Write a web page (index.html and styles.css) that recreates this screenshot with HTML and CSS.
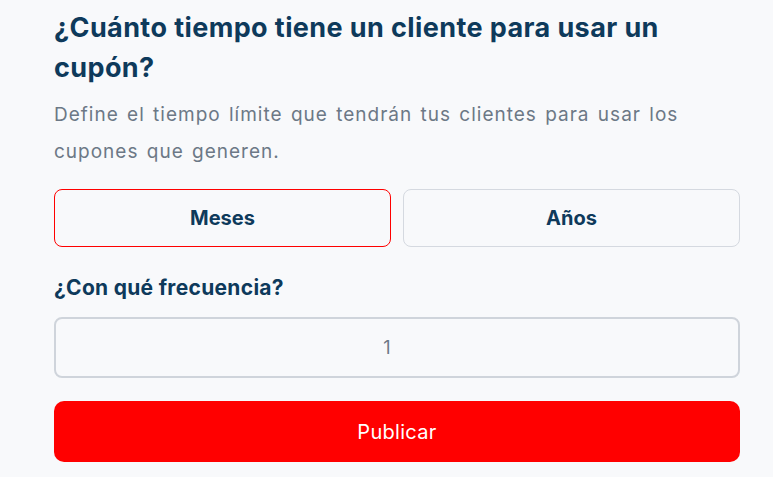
FILE: index.html
```html
<!DOCTYPE html>
<html lang="es">
<head>
  <meta charset="UTF-8">
  <meta name="viewport" content="width=device-width,initial-scale=1">
  <title>Cupón</title>
  <link rel="stylesheet" href="styles.css">
</head>
<body>
  <div class="form">
    <h2 class="title">¿Cuánto tiempo tiene un cliente para usar un cupón?</h2>
    <p class="desc">Define el tiempo límite que tendrán tus clientes para usar los cupones que generen.</p>
    <div class="options">
      <button class="option active">Meses</button>
      <button class="option">Años</button>
    </div>
    <label class="label">¿Con qué frecuencia?</label>
    <input class="field" type="text" value="1">
    <button class="submit">Publicar</button>
  </div>
</body>
</html>
```

FILE: styles.css
```css
body{
  margin:0;
  background:#f8f9fb;
  font-family:Inter,"Open Sans",sans-serif;
}
.form{
  width:686px;
  padding:8px 0 0 54px;
  display:flex;
  flex-direction:column;
}
.title{
  margin:0;
  font-size:27px;
  letter-spacing:0.4px;
  line-height:40px;
  font-weight:700;
  color:#0e3a5b;
}
.desc{
  margin:8px 0 0;
  font-size:19px;
  letter-spacing:1px;
  word-spacing:2px;
  line-height:37px;
  color:#6c7886;
}
.options{
  display:flex;
  gap:12px;
  margin-top:19px;
}
.option{
  flex:1;
  height:58px;
  border:1px solid #d5d9e0;
  border-radius:8px;
  background:#f8f9fb;
  font-family:inherit;
  font-size:20px;
  font-weight:700;
  color:#0e3a5b;
}
.option.active{
  border-color:#ff0000;
}
.label{
  margin-top:29px;
  font-size:21px;
  letter-spacing:0.3px;
  line-height:24px;
  font-weight:700;
  color:#0e3a5b;
}
.field{
  margin-top:17px;
  height:61px;
  box-sizing:border-box;
  padding:0 20px 0 0;
  border:2px solid #cfd4db;
  border-radius:8px;
  background:#f8f9fb;
  text-align:center;
  font-family:inherit;
  font-size:18px;
  color:#6c7886;
}
.submit{
  margin-top:23px;
  height:61px;
  border:0;
  border-radius:10px;
  background:#ff0000;
  color:#fff;
  font-family:inherit;
  font-size:20px;
  letter-spacing:0.3px;
}
```
